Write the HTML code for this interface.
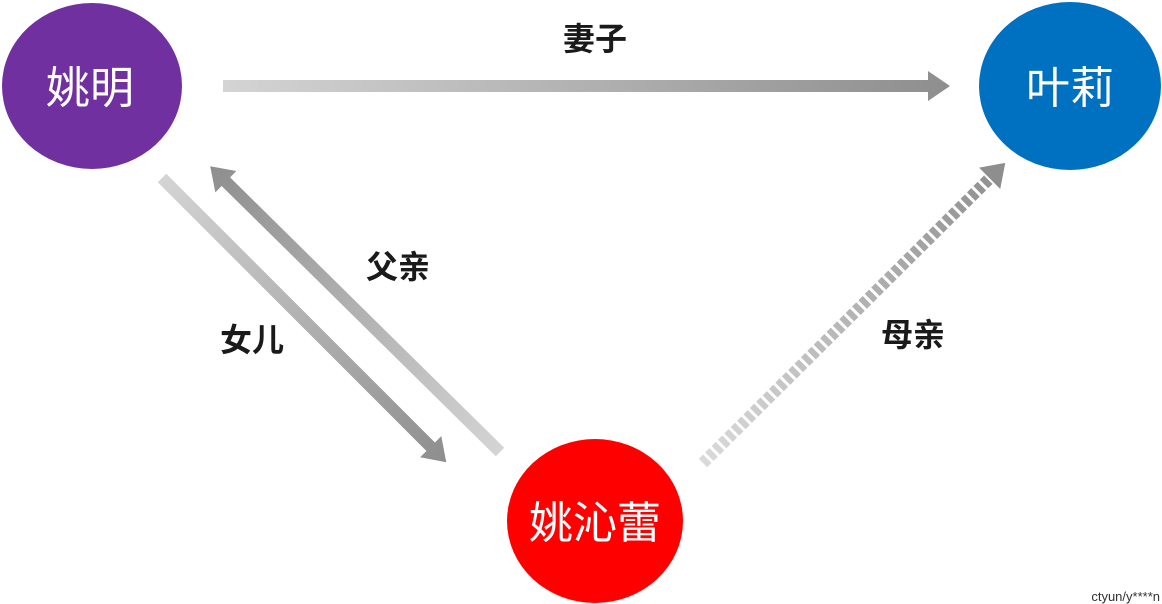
<!DOCTYPE html>
<html><head><meta charset="utf-8"><style>
html,body{margin:0;padding:0;background:#fff;width:1162px;height:604px;overflow:hidden}
text{font-family:"Liberation Sans","Noto Sans CJK SC",sans-serif}
</style></head><body>
<svg width="1162" height="604" viewBox="0 0 1162 604" xmlns="http://www.w3.org/2000/svg">
<defs>
<linearGradient id="g" x1="0" y1="0" x2="1" y2="0"><stop offset="0" stop-color="#d4d4d4"/><stop offset="1" stop-color="#8e8e8e"/></linearGradient>
<linearGradient id="gd" gradientUnits="userSpaceOnUse" x1="0" y1="0" x2="426" y2="0"><stop offset="0" stop-color="#dadada"/><stop offset="1" stop-color="#8e8e8e"/></linearGradient>
</defs>
<ellipse cx="92" cy="86" rx="90" ry="83" fill="#7030a0"/>
<ellipse cx="1070" cy="86" rx="91" ry="84" fill="#0070c0"/>
<ellipse cx="595" cy="521" rx="88" ry="82" fill="#ff0000"/>
<text x="90" y="103" font-size="44" fill="#fff" text-anchor="middle">姚明</text>
<text x="1070" y="103" font-size="44" fill="#fff" text-anchor="middle">叶莉</text>
<text x="595" y="538" font-size="44" fill="#fff" text-anchor="middle">姚沁蕾</text>
<g transform="translate(223,86)"><path d="M0,-6H705V-15L727,0L705,15V6H0Z" fill="url(#g)"/></g>
<g transform="translate(162,178) rotate(45)"><path d="M0,-6H380V-15L402,0L380,15V6H0Z" fill="url(#g)"/></g>
<g transform="translate(500,452) rotate(224.6)"><path d="M0,-6H385V-15L407,0L385,15V6H0Z" fill="url(#g)"/></g>
<g transform="translate(703,463) rotate(-44.8)">
<line x1="0" y1="0" x2="406" y2="0" stroke="url(#gd)" stroke-width="12" stroke-dasharray="6 3"/>
<path d="M404,-15L426,0L404,15Z" fill="#8e8e8e"/>
</g>
<g font-size="32" font-weight="bold" fill="#1a1a1a" text-anchor="middle">
<text x="595" y="50">妻子</text>
<text x="398" y="278">父亲</text>
<text x="252" y="351">女儿</text>
<text x="913" y="346">母亲</text>
</g>
<text x="1160" y="601" font-size="13" fill="#333" text-anchor="end">ctyun/y****n</text>
</svg>
</body></html>
